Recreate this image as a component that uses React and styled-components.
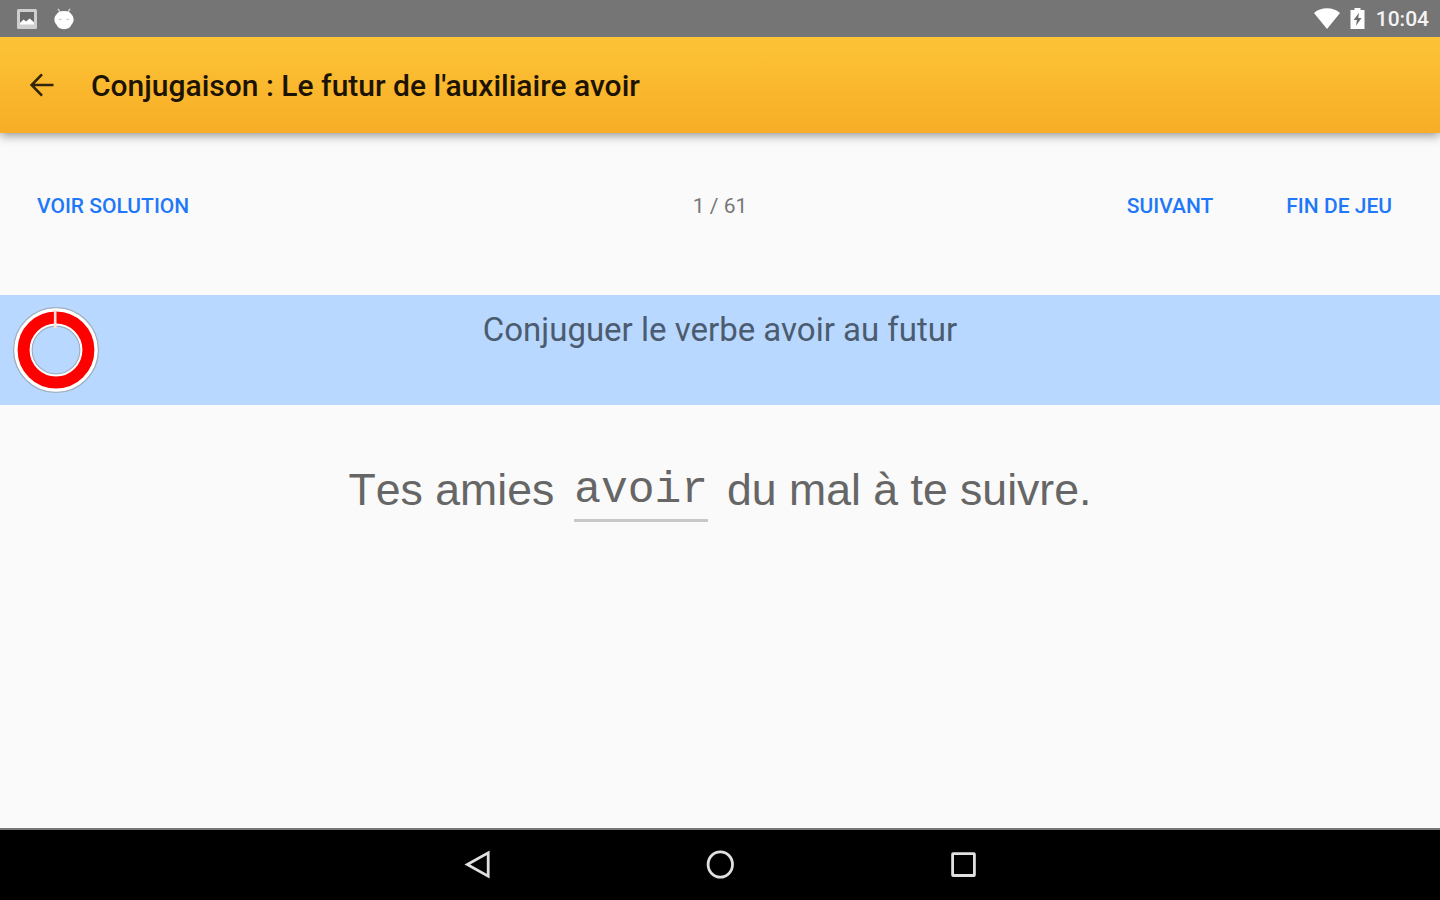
import React from 'react'
import styled, { createGlobalStyle } from 'styled-components'

const App = () => {
  return (
    <Screen>
      <GlobalStyle />
      <StatusBar>
        <StatusGroup>
          <PictureIcon />
          <AndroidIcon />
        </StatusGroup>
        <StatusGroup>
          <WifiIcon />
          <BatteryIcon />
          <Clock>10:04</Clock>
        </StatusGroup>
      </StatusBar>
      <AppBar>
        <BackButton aria-label="Retour">
          <svg width="26" height="24" viewBox="0 0 26 24" fill="none" stroke="#33250a" strokeWidth="2.6">
            <path d="M24.5 12H3M13 1.4L2.600 12 13 22.600" />
          </svg>
        </BackButton>
        <Title>Conjugaison : Le futur de l'auxiliaire avoir</Title>
      </AppBar>
      <Main>
        <Controls>
          <ControlsSide>
            <TextButton>VOIR SOLUTION</TextButton>
          </ControlsSide>
          <Counter>1 / 61</Counter>
          <ControlsSide $end>
            <TextButton>SUIVANT</TextButton>
            <TextButton>FIN DE JEU</TextButton>
          </ControlsSide>
        </Controls>
        <Instruction>
          <Timer />
          <InstructionText>Conjuguer le verbe avoir au futur</InstructionText>
        </Instruction>
        <Sentence>
          <span>Tes amies</span>
          <Answer>avoir</Answer>
          <span>du mal à te suivre.</span>
        </Sentence>
      </Main>
      <NavBar>
        <NavButton aria-label="Retour">
          <svg width="28" height="32" viewBox="0 0 28 32" fill="none" stroke="#e0e0e0" strokeWidth="2.8">
            <path d="M25.200 3.800v23.400L4.300 15.500z" />
          </svg>
        </NavButton>
        <NavButton aria-label="Accueil">
          <svg width="28" height="32" viewBox="0 0 28 32" fill="none" stroke="#e0e0e0" strokeWidth="2.8">
            <ellipse cx="14.300" cy="15.500" rx="12.2" ry="12.7" />
          </svg>
        </NavButton>
        <NavButton aria-label="Applications">
          <svg width="28" height="32" viewBox="0 0 28 32" fill="none" stroke="#e0e0e0" strokeWidth="2.8">
            <rect x="3.6" y="4.700" width="21.800" height="21.800" rx="0.5" />
          </svg>
        </NavButton>
      </NavBar>
    </Screen>
  )
}

export default App

// Icons
const PictureIcon = () => (
  <svg width="20" height="20" viewBox="0 0 20 20">
    <rect width="20" height="20" rx="1.5" fill="#cfcfcf" />
    <rect x="3" y="3" width="14" height="11" fill="#6b6b6b" />
    <path d="M3 14l3.500-3.500 2.600 2 3.500-3 4.400 3.700v2.300H3z" fill="#fff" />
  </svg>
)

const AndroidIcon = () => (
  <svg width="20" height="22" viewBox="0 0 20 22">
    <path d="M4 .8l2.6 4M16 .8l-2.6 4" stroke="#cfcfcf" strokeWidth="1.4" />
    <path d="M10 3c3.500 0 6.500 1 7.500 3.500 1.400 1.300 2.100 3 2.100 5 0 2.200-.8 3.800-1.900 4.800-1 3.200-3.700 4.900-7.700 4.900s-6.700-1.700-7.700-4.900C1.200 15.300.4 13.700.4 11.500c0-2 .7-3.700 2.100-5C3.500 4 6.500 3 10 3z" fill="#fff" />
    <path d="M5 11.400h2.500M12.500 11.400H15" stroke="#cccccc" strokeWidth="1.2" />
  </svg>
)

const WifiIcon = () => (
  <svg width="26" height="21" viewBox="0 0 26 21">
    <path d="M0 5C3.700 1.800 8 .3 13 .3S22.300 1.800 26 5L13 21z" fill="#fff" />
  </svg>
)

const BatteryIcon = () => (
  <svg width="15" height="21" viewBox="0 0 15 21">
    <path d="M4.500 0h6v2H14.500v19H.5V2h4z" fill="#fff" />
    <path d="M9 4.800L3.600 12h3.300L6 17.800 11.600 10H8.300z" fill="#6e6e6e" />
  </svg>
)

const Timer = () => (
  <TimerSvg width="88" height="88" viewBox="0 0 88 88" fill="none">
    <circle cx="44" cy="44" r="42.300" stroke="#a3adb9" strokeWidth="1.400" />
    <circle cx="44" cy="44" r="24" stroke="#a3adb9" strokeWidth="1.400" />
    <circle cx="44" cy="44" r="33.100" stroke="#fff" strokeWidth="17.200" />
    <circle cx="44" cy="44" r="32.400" stroke="#f00" strokeWidth="12" />
    <path d="M43.200 4v18" stroke="#ffdede" strokeWidth="2.600" />
  </TimerSvg>
)

const GlobalStyle = createGlobalStyle`
  body {
    margin: 0;
    overflow: hidden;
    background: #fafafa;
  }

  button {
    border: 0;
    padding: 0;
    background: none;
    font: inherit;
    color: inherit;
  }

  svg {
    display: block;
  }
`

const Screen = styled.div`
  display: flex;
  flex-direction: column;
  width: 1440px;
  height: 900px;
  background: #fafafa;
  font-family: Roboto, 'Liberation Sans', sans-serif;
`

// Status bar
const StatusBar = styled.div`
  position: relative;
  z-index: 1;
  display: flex;
  justify-content: space-between;
  align-items: center;
  box-sizing: border-box;
  height: 37px;
  padding: 0 11px 0 17px;
  background: #757575;
`

const StatusGroup = styled.div`
  display: flex;
  align-items: center;

  svg + svg {
    margin-left: 17px;
  }

  svg:first-child + svg:nth-last-child(2) {
    margin-left: 10px;
  }
`

const Clock = styled.span`
  margin-left: 11px;
  padding-top: 2px;
  font-size: 21px;
  font-weight: 500;
  line-height: 35px;
  color: #f4f4f4;
`

// App bar
const AppBar = styled.header`
  display: flex;
  align-items: center;
  box-sizing: border-box;
  height: 96px;
  padding-left: 29px;
  background: linear-gradient(#fdc436, #f7ad27);
  box-shadow: 0 2px 10px rgba(0, 0, 0, 0.45);
`

const BackButton = styled.button`
  width: 26px;
  height: 26px;
`

const Title = styled.h1`
  margin: 2px 0 0 36px;
  font-size: 30px;
  font-weight: 500;
  line-height: 40px;
  color: #1c1303;
`

// Exercise
const Main = styled.main`
  flex: 1;
`

const Controls = styled.div`
  display: grid;
  grid-template-columns: 1fr auto 1fr;
  align-items: center;
  box-sizing: border-box;
  height: 162px;
  padding: 0 48px 17px 37px;
`

const ControlsSide = styled.div`
  display: flex;
  gap: 73px;
  justify-content: ${({ $end }) => ($end ? 'flex-end' : 'flex-start')};
`

const TextButton = styled.button`
  font-size: 21px;
  font-weight: 500;
  line-height: 30px;
  color: #1f78f8;
`

const Counter = styled.span`
  margin-left: 11px;
  font-size: 21px;
  line-height: 30px;
  color: #777;
`

const Instruction = styled.section`
  display: grid;
  grid-template-columns: 100px 1fr 100px;
  height: 110px;
  background: #b9d8ff;
`

const TimerSvg = styled.svg`
  margin: 11px 0 0 12px;
`

const InstructionText = styled.p`
  margin: 15px 0 0;
  font-size: 33px;
  line-height: 40px;
  text-align: center;
  color: #4c5c70;
`

const Sentence = styled.div`
  display: flex;
  justify-content: center;
  align-items: flex-start;
  margin-top: 60px;
  font-family: 'Liberation Sans', Arial, sans-serif;
  font-size: 44.6px;
  font-kerning: none;
  line-height: 50px;
  color: #666;
`

const Answer = styled.span`
  margin: 0 19px 0 20px;
  padding-bottom: 4px;
  border-bottom: 3px solid #c8c8c8;
  font-family: 'Liberation Mono', 'Courier New', monospace;
`

// Navigation bar
const NavBar = styled.nav`
  display: flex;
  justify-content: center;
  gap: 215px;
  box-sizing: border-box;
  height: 72px;
  padding-top: 19px;
  border-top: 2px solid #777;
  background: #000;
`

const NavButton = styled.button`
  width: 28px;
  height: 32px;
`
